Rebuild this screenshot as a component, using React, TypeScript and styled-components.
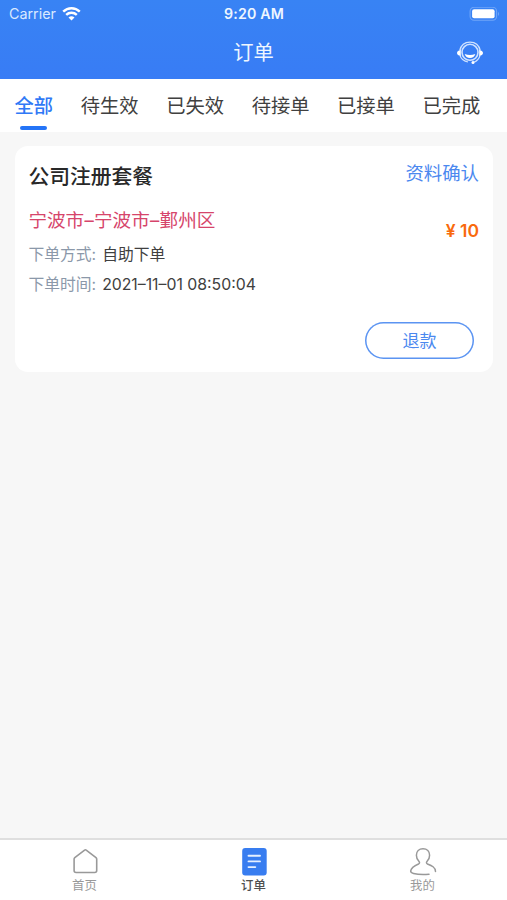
import React from "react";
import styled, { createGlobalStyle } from "styled-components";

const Global = createGlobalStyle`
  * { box-sizing: border-box; }
  body {
    margin: 0;
    background: #f7f7f7;
    font-family: Inter, "Noto Sans CJK SC", sans-serif;
    color: #404040;
  }
`;

const Screen = styled.div`
  display: flex;
  flex-direction: column;
  width: 100%;
  height: 100vh;
  overflow: hidden;
`;

const Header = styled.header`
  flex: none;
  height: 79px;
  background: linear-gradient(#3883f4, #387cf5);
  color: #eef6ff;
`;

const StatusBar = styled.div`
  display: grid;
  grid-template-columns: 1fr auto 1fr;
  align-items: center;
  height: 27px;
  padding: 0 7px 0 9px;
`;

const Carrier = styled.div`
  display: flex;
  align-items: center;
  gap: 6px;
  font-size: 14.3px;
  line-height: 26px;
  color: #d9e9ff;
`;

const Clock = styled.div`
  font-size: 14.2px;
  font-weight: 600;
  letter-spacing: 0.2px;
  line-height: 28px;
  margin-left: -1px;
`;

const BatterySlot = styled.div`
  display: flex;
  justify-content: flex-end;
`;

const TitleBar = styled.div`
  display: grid;
  grid-template-columns: 1fr auto 1fr;
  align-items: center;
  height: 50px;
  padding: 0 23px;
`;

const PageTitle = styled.h1`
  grid-column: 2;
  margin: 0;
  font-size: 20.3px;
  font-weight: 400;
  line-height: 51px;
`;

const ServiceButton = styled.button`
  justify-self: end;
  display: flex;
  padding: 0;
  border: 0;
  background: none;
`;

const Tabs = styled.nav`
  flex: none;
  display: flex;
  gap: 27.6px;
  height: 53px;
  padding: 0 15px 0 14.6px;
  background: #fff;
`;

const Tab = styled.div<{ $active?: boolean }>`
  display: flex;
  flex-direction: column;
  align-items: center;
  font-size: 19.3px;
  line-height: 54px;
  height: 53px;
  white-space: nowrap;
  font-weight: ${(p) => (p.$active ? 500 : 400)};
  color: ${(p) => (p.$active ? "#3079f6" : "#404040")};

  &::after {
    content: "";
    display: ${(p) => (p.$active ? "block" : "none")};
    flex: none;
    width: 27px;
    height: 4px;
    margin-top: -7px;
    border-radius: 2px;
    background: #2474f7;
  }
`;

const Content = styled.main`
  flex: 1;
  padding: 14px 14px 0 15px;
`;

const Card = styled.article`
  height: 226px;
  padding: 15px 14px 13px 13.4px;
  border-radius: 13px;
  background: #fff;
  display: flex;
  flex-direction: column;
`;

const CardHead = styled.div`
  display: flex;
  justify-content: space-between;
  height: 32px;
`;

const CardTitle = styled.h2`
  margin: 0;
  font-size: 20.8px;
  line-height: 32px;
  font-weight: 500;
  color: #282828;
`;

const Status = styled.span`
  font-size: 18.4px;
  line-height: 25px;
  color: #4b88ef;
`;

const CardBody = styled.div`
  display: flex;
  justify-content: space-between;
  margin-top: 12px;
`;

const Region = styled.div`
  font-size: 18.6px;
  line-height: 30px;
  color: #d6456b;
`;

const Dash = styled.span`
  display: inline-block;
  width: 9.8px;
  text-align: center;
`;

const Field = styled.div`
  display: flex;
  gap: 6px;
  font-size: 15.8px;
  line-height: 29.5px;
  color: #404040;
`;

const Label = styled.span`
  color: #8b98a9;
`;

const Fields = styled.div`
  padding-top: 5px;
`;

const Price = styled.div`
  margin-top: 11px;
  font-size: 17.5px;
  font-weight: 600;
  line-height: 30px;
  color: #f96a0c;
`;

const Actions = styled.div`
  display: flex;
  justify-content: flex-end;
  margin-top: auto;
  padding-right: 5px;
`;

const Refund = styled.button`
  width: 109px;
  height: 37px;
  padding: 0 0 2px;
  border: 0;
  border-radius: 19px;
  background: #fff;
  box-shadow: inset 0 0 0 1.5px #5b94f2;
  color: #4b88ef;
  font: inherit;
  font-size: 17px;
`;

const TabBar = styled.footer`
  flex: none;
  display: grid;
  grid-template-columns: 1fr 1fr 1fr;
  height: 62px;
  border-top: 2px solid #dfdfdf;
  background: #fff;
`;

const NavItem = styled.div<{ $active?: boolean }>`
  display: flex;
  flex-direction: column;
  align-items: center;
  padding-top: 7px;
  font-size: 12.4px;
  font-weight: ${(p) => (p.$active ? 500 : 400)};
  line-height: 18px;
  color: ${(p) => (p.$active ? "#505050" : "#999")};

  svg {
    display: block;
    margin-bottom: 1px;
  }
`;

const WifiIcon = () => (
  <svg width="19" height="14" viewBox="0 0 19 14" fill="none" stroke="#fff" strokeWidth="2.4">
    <path d="M1.2 4.7C5.9.1 13.1.1 17.8 4.7" />
    <path d="M4.2 7.9C7.1 5.1 11.900 5.100 14.800 7.900" />
    <path d="M9.5 13.500 6.500 10.400Q9.500 8 12.500 10.400Z" fill="#fff" stroke="none" />
  </svg>
);

const BatteryIcon = () => (
  <svg width="31" height="15" viewBox="0 0 31 15">
    <rect x="1.1" y="0.300" width="26.500" height="13" rx="4" fill="none" stroke="#6fa5f8" strokeWidth="1.100" />
    <rect x="3.100" y="2.300" width="22.500" height="9" rx="2" fill="#fff" />
    <path d="M29 4.700q2 2.200 0 4.400z" fill="#6fa5f8" />
  </svg>
);

const HeadsetIcon = () => (
  <svg width="28" height="24" viewBox="0 0 28 24" fill="none" stroke="#cfe2ff">
    <path d="M3.800 9.500C5 4.200 9 1.100 14 1.100s9 3.100 10.200 8.400" strokeWidth="1.400" />
    <circle cx="14" cy="11.300" r="8" strokeWidth="1.600" />
    <path d="M4 14.500c1.200 3.500 4 5.800 8 6.500M24 14.500c-1 3.500-3.200 5.800-6.500 6.800" strokeWidth="1.200" />
    <path d="M4.800 9v6C2.400 14.700 1 13.400 1 12S2.400 9.300 4.800 9zM23.200 9v6c2.400-.3 3.800-1.600 3.800-3S25.600 9.300 23.200 9z" fill="#fff" stroke="none" />
    <path d="M8.700 13q5.300 2 10.600 0-1.200 4-5.300 4t-5.300-4z" fill="#fff" stroke="none" />
    <circle cx="17" cy="21.500" r="1.500" fill="#fff" stroke="none" />
  </svg>
);

const HomeIcon = () => (
  <svg width="28" height="29" viewBox="0 0 28 29" fill="none" stroke="#999" strokeWidth="1.6" strokeLinejoin="round">
    <path d="M13.600 3.100q.8-.6 1.600 0l9.800 7.500q.7.6.7 1.500v11.400q0 2-2 2h-18.600q-2 0-2-2V12.100q0-.9.7-1.500z" />
  </svg>
);

const OrderIcon = () => (
  <svg width="28" height="29" viewBox="0 0 28 29">
    <rect x="2.200" y="1" width="24.500" height="27.500" rx="3" fill="#387df0" />
    <path d="M8.500 8.700h11.500M8.500 14.400h11.500M8.500 20.100h6.800" stroke="#e5f0ff" strokeWidth="1.900" strokeLinecap="round" />
  </svg>
);

const UserIcon = () => (
  <svg width="28" height="29" viewBox="0 0 28 29" fill="none" stroke="#999" strokeWidth="1.500" strokeLinecap="round">
    <path d="M20 27.200C14 27.700 8 27.300 4.500 26.500 2.500 26 1.500 25.300 1.700 23.900 2.200 20.500 6 18.500 9.500 17q2-1 .2-3C8 12.200 7.400 10.500 7.400 8.200 7.400 4.400 10 1.700 14 1.700s6.600 2.700 6.600 6.500c0 2.300-.6 4-2.300 5.800q-1.800 2 .2 3c4.200 1.700 7.900 3.200 8 7.500" />
  </svg>
);

const filters = ["全部", "待生效", "已失效", "待接单", "已接单", "已完成"];

export default function App() {
  return (
    <Screen>
      <Global />
      <Header>
        <StatusBar>
          <Carrier>
            Carrier
            <WifiIcon />
          </Carrier>
          <Clock>9:20 AM</Clock>
          <BatterySlot>
            <BatteryIcon />
          </BatterySlot>
        </StatusBar>
        <TitleBar>
          <PageTitle>订单</PageTitle>
          <ServiceButton aria-label="客服">
            <HeadsetIcon />
          </ServiceButton>
        </TitleBar>
      </Header>
      <Tabs>
        {filters.map((name, i) => (
          <Tab key={name} $active={i === 0}>
            {name}
          </Tab>
        ))}
      </Tabs>
      <Content>
        <Card>
          <CardHead>
            <CardTitle>公司注册套餐</CardTitle>
            <Status>资料确认</Status>
          </CardHead>
          <CardBody>
            <div>
              <Region>
                宁波市<Dash>–</Dash>宁波市<Dash>–</Dash>鄞州区
              </Region>
              <Fields>
                <Field>
                  <Label>下单方式:</Label>
                  <span>自助下单</span>
                </Field>
                <Field>
                  <Label>下单时间:</Label>
                  <span>2021–11–01 08:50:04</span>
                </Field>
              </Fields>
            </div>
            <Price>¥ 10</Price>
          </CardBody>
          <Actions>
            <Refund>退款</Refund>
          </Actions>
        </Card>
      </Content>
      <TabBar>
        <NavItem>
          <HomeIcon />
          首页
        </NavItem>
        <NavItem $active>
          <OrderIcon />
          订单
        </NavItem>
        <NavItem>
          <UserIcon />
          我的
        </NavItem>
      </TabBar>
    </Screen>
  );
}
